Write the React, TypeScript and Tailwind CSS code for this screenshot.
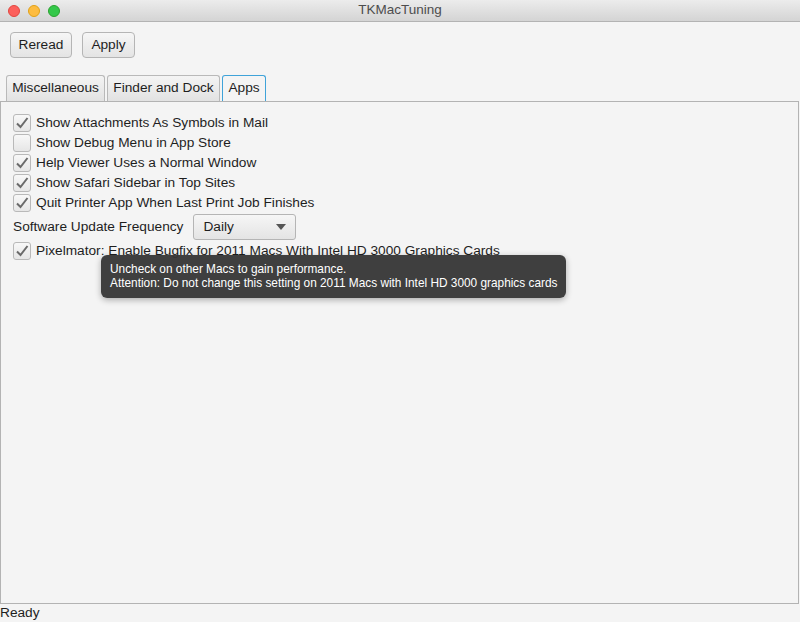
import React from "react";

const font = { fontFamily: '"Liberation Sans", Arial, sans-serif' };

const options = [
  { label: "Show Attachments As Symbols in Mail", checked: true },
  { label: "Show Debug Menu in App Store", checked: false },
  { label: "Help Viewer Uses a Normal Window", checked: true },
  { label: "Show Safari Sidebar in Top Sites", checked: true },
  { label: "Quit Printer App When Last Print Job Finishes", checked: true },
];

function Checkbox({ checked }: { checked: boolean }) {
  return (
    <div className="flex h-[18px] w-[18px] items-center justify-center rounded-[3px] border border-[#b9b9b9] bg-gradient-to-b from-[#f8f8f8] to-[#e6e6e6]">
      {checked && (
        <svg width="14" height="12" viewBox="0 0 14 12">
          <path d="M2 6.5 L5.5 10 L12.5 1" stroke="#6a6a6a" strokeWidth="2" fill="none" />
        </svg>
      )}
    </div>
  );
}

function CheckRow({ label, checked }: { label: string; checked: boolean }) {
  return (
    <div className="flex h-[20px] items-center gap-[5px] pl-[12px]">
      <Checkbox checked={checked} />
      <span>{label}</span>
    </div>
  );
}

export default function App() {
  return (
    <div style={font} className="flex h-[622px] w-[800px] flex-col overflow-hidden bg-[#f4f4f4] text-[13.7px] text-[#1e1e1e]">
      {/* title bar */}
      <div className="relative flex h-[22px] items-center justify-center border-b border-[#b3b3b3] bg-gradient-to-b from-[#ececec] to-[#d4d4d4]">
        <div className="absolute left-[8px] top-[5px] flex gap-[8px]">
          <div className="h-[12px] w-[12px] rounded-full border border-[#e2463f] bg-[#fc605c]" />
          <div className="h-[12px] w-[12px] rounded-full border border-[#e1a116] bg-[#fdbc40]" />
          <div className="h-[12px] w-[12px] rounded-full border border-[#2aa22f] bg-[#34c84a]" />
        </div>
        <span className="text-[13.5px] text-[#4d4d4d]">TKMacTuning</span>
      </div>

      {/* toolbar */}
      <div className="flex gap-[10px] px-[10px] pt-[10px]">
        <button className="h-[26px] w-[62px] rounded-[4px] border border-[#b5b5b5] bg-gradient-to-b from-[#f6f6f6] to-[#e4e4e4] text-[#1e1e1e]">
          Reread
        </button>
        <button className="h-[26px] w-[53px] rounded-[4px] border border-[#b5b5b5] bg-gradient-to-b from-[#f6f6f6] to-[#e4e4e4] text-[#1e1e1e]">
          Apply
        </button>
      </div>

      {/* tabs */}
      <div className="mt-[17px] flex gap-[2px] pl-[6px]">
        <div className="flex h-[26px] w-[99px] items-center justify-center rounded-t-[3px] border border-b-0 border-[#b9b9b9] bg-gradient-to-b from-[#f4f4f4] to-[#e2e2e2]">
          Miscellaneous
        </div>
        <div className="flex h-[26px] w-[113px] items-center justify-center rounded-t-[3px] border border-b-0 border-[#b9b9b9] bg-gradient-to-b from-[#f4f4f4] to-[#e2e2e2]">
          Finder and Dock
        </div>
        <div className="flex h-[26px] w-[44px] items-center justify-center rounded-t-[3px] border border-b-0 border-[#3fa3d9] bg-[#f4f4f4]">
          Apps
        </div>
      </div>

      {/* content */}
      <div className="relative mr-[1px] flex-1 border border-[#b3b3b3] pt-[11px]">
        <div className="flex flex-col">
          {options.map((o) => (
            <CheckRow key={o.label} label={o.label} checked={o.checked} />
          ))}
          <div className="mt-[1px] flex h-[26px] items-center pl-[12px]">
            <span>Software Update Frequency</span>
            <div className="ml-[10px] flex h-[26px] w-[103px] items-center justify-between rounded-[3px] border border-[#b5b5b5] bg-gradient-to-b from-[#f6f6f6] to-[#e4e4e4] px-[9px]">
              <span>Daily</span>
              <svg width="10" height="6" viewBox="0 0 10 6">
                <path d="M0 0 L10 0 L5 6 Z" fill="#555" />
              </svg>
            </div>
          </div>
          <div className="mt-[1px]">
            <CheckRow label="Pixelmator: Enable Bugfix for 2011 Macs With Intel HD 3000 Graphics Cards" checked />
          </div>
        </div>

        {/* tooltip */}
        <div className="absolute left-[100px] top-[153px] rounded-[6px] bg-[#353535]/95 px-[9px] pb-[8px] pt-[7px] text-[11.85px] leading-[14px] text-white shadow-[0_2px_6px_rgba(0,0,0,0.3)]">
          <div>Uncheck on other Macs to gain performance.</div>
          <div>Attention: Do not change this setting on 2011 Macs with Intel HD 3000 graphics cards</div>
        </div>
      </div>

      {/* status */}
      <div className="flex h-[18px] items-center text-[13.7px]">Ready</div>
    </div>
  );
}
